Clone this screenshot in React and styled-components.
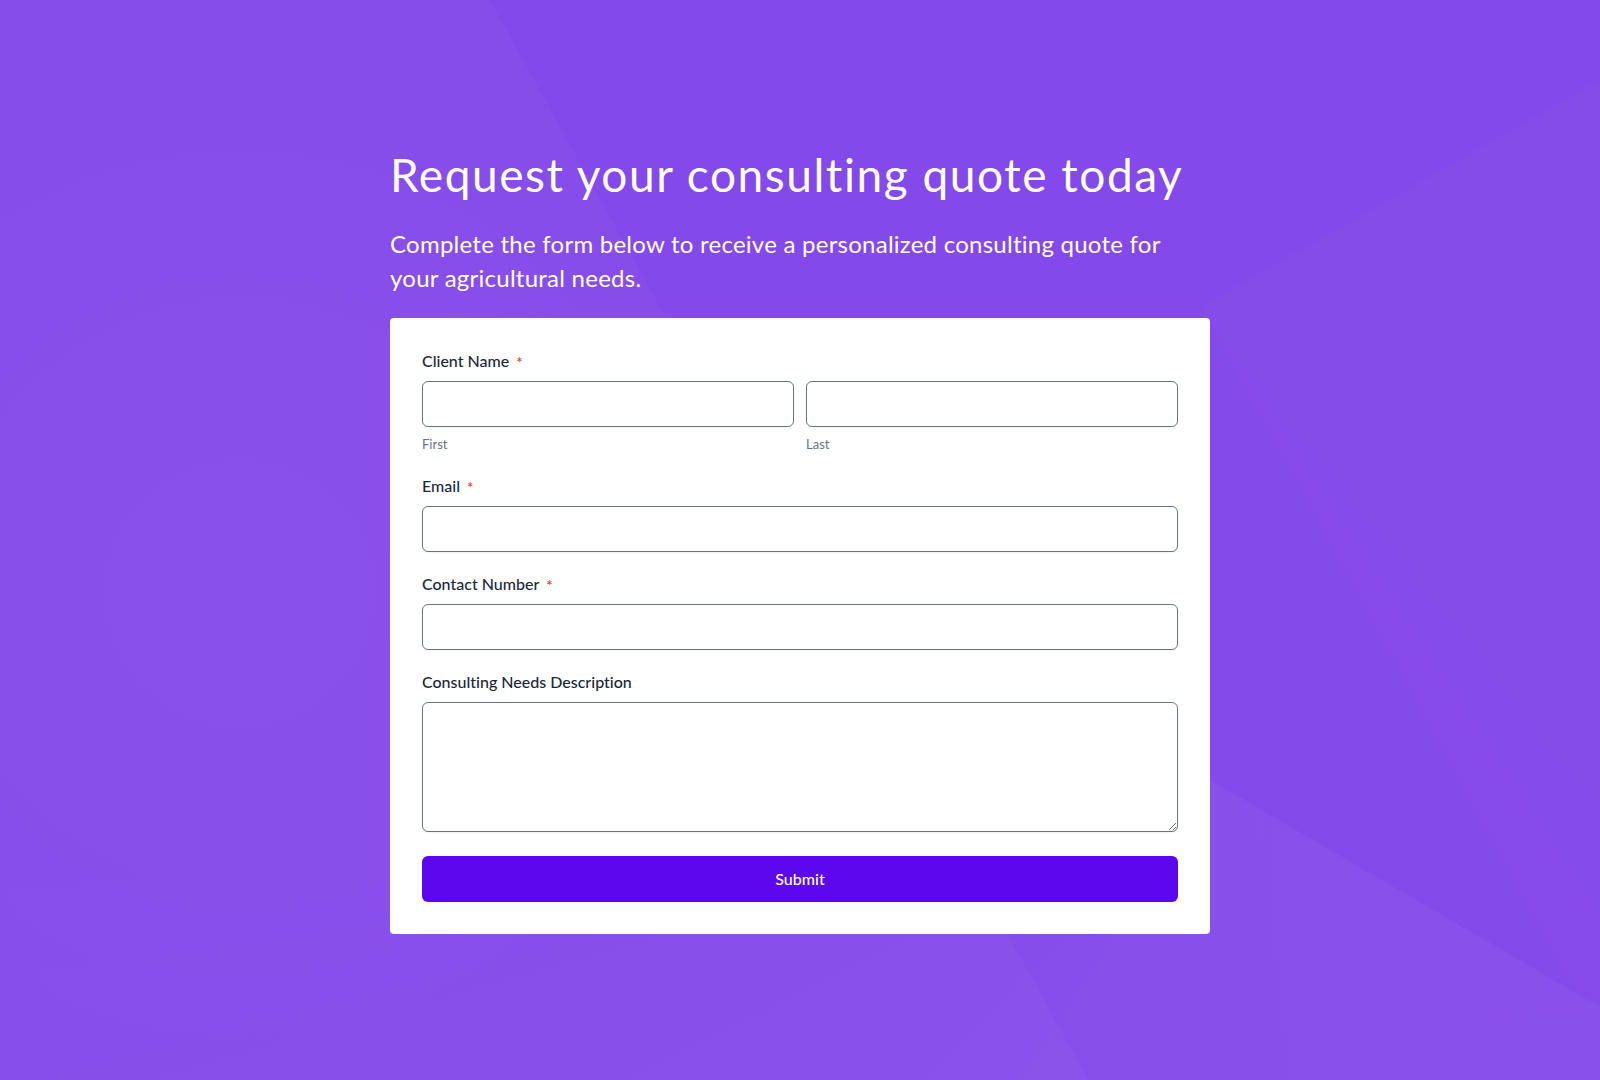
import React from "react";
import styled, { createGlobalStyle } from "styled-components";

const GlobalStyle = createGlobalStyle`
  * {
    box-sizing: border-box;
  }
  body {
    margin: 0;
    font-family: Lato, "Open Sans", sans-serif;
  }
`;

// flat violet backdrop with a few faint lighter facets
const Page = styled.div`
  min-height: 100vh;
  display: flex;
  align-items: center;
  justify-content: center;
  background-color: #8449ea;
  background-image:
    linear-gradient(61deg, rgba(255, 255, 255, 0.025) 0 49.5%, transparent 49.5%),
    conic-gradient(from 120.2deg at 1210px 780px, rgba(255, 255, 255, 0.03) 0deg 90deg, transparent 150deg),
    conic-gradient(from 60.4deg at 1200px 307px, rgba(255, 255, 255, 0.015) 0deg 80deg, transparent 130deg),
    radial-gradient(circle at 15% 55%, rgba(255, 255, 255, 0.02), transparent 35%);
`;

const Wrapper = styled.div`
  width: 820px;
  margin-top: 1px;
  display: flex;
  flex-direction: column;
`;

const Title = styled.h1`
  margin: 0;
  font-size: 46px;
  line-height: 1.2;
  font-weight: 400;
  letter-spacing: 1.55px;
  font-variant-ligatures: none;
  color: #ffffff;
`;

const Subtitle = styled.p`
  max-width: 790px;
  margin: 24px 0 23px;
  font-size: 24px;
  line-height: 34px;
  font-weight: 400;
  letter-spacing: 0.25px;
  font-variant-ligatures: none;
  color: #ffffff;
`;

const Card = styled.form`
  background: #ffffff;
  border-radius: 4px;
  padding: 31px 32px 32px;
  display: flex;
  flex-direction: column;
  gap: 20px;
`;

const Field = styled.div`
  display: flex;
  flex-direction: column;
`;

const Label = styled.label`
  font-size: 16px;
  line-height: 24px;
  font-weight: 500;
  color: #1b2638;
  margin-bottom: 8px;
  font-variant-ligatures: none;
`;

const Required = styled.span`
  position: relative;
  top: 1px;
  color: #dc3b26;
  font-size: 15px;
  line-height: 1;
  margin-left: 7px;
`;

const Row = styled.div`
  display: grid;
  grid-template-columns: 1fr 1fr;
  gap: 12px;
`;

const Part = styled.div`
  display: flex;
  flex-direction: column;
`;

const Input = styled.input`
  height: 46px;
  width: 100%;
  border: 1px solid #6b7280;
  border-radius: 6px;
  background: #ffffff;
  padding: 0 12px;
  font-family: inherit;
  font-size: 16px;
  box-shadow: 0 1px 2px rgba(0, 0, 0, 0.05);
  outline: none;
`;

const TextArea = styled.textarea`
  display: block;
  height: 130px;
  width: 100%;
  border: 1px solid #6b7280;
  border-radius: 6px;
  background: #ffffff;
  padding: 10px 12px;
  font-family: inherit;
  font-size: 16px;
  box-shadow: 0 1px 2px rgba(0, 0, 0, 0.05);
  resize: vertical;
  outline: none;
`;

const SubLabel = styled.span`
  margin-top: 7px;
  font-size: 13px;
  line-height: 20px;
  color: #6b7280;
`;

const SubmitButton = styled.button`
  margin-top: 4px;
  height: 46px;
  width: 100%;
  border: none;
  border-radius: 6px;
  background: #5c07ee;
  color: #ffffff;
  font-family: inherit;
  font-size: 16px;
  font-weight: 500;
  cursor: pointer;
`;

const App = () => {
  return (
    <Page>
      <GlobalStyle />
      <Wrapper>
        <Title>Request your consulting quote today</Title>
        <Subtitle>
          Complete the form below to receive a personalized consulting quote for
          your agricultural needs.
        </Subtitle>
        <Card onSubmit={(e) => e.preventDefault()}>
          <Field>
            <Label>
              Client Name<Required>*</Required>
            </Label>
            <Row>
              <Part>
                <Input type="text" />
                <SubLabel>First</SubLabel>
              </Part>
              <Part>
                <Input type="text" />
                <SubLabel>Last</SubLabel>
              </Part>
            </Row>
          </Field>
          <Field>
            <Label>
              Email<Required>*</Required>
            </Label>
            <Input type="email" />
          </Field>
          <Field>
            <Label>
              Contact Number<Required>*</Required>
            </Label>
            <Input type="tel" />
          </Field>
          <Field>
            <Label>Consulting Needs Description</Label>
            <TextArea />
          </Field>
          <SubmitButton type="submit">Submit</SubmitButton>
        </Card>
      </Wrapper>
    </Page>
  );
};

export default App;
